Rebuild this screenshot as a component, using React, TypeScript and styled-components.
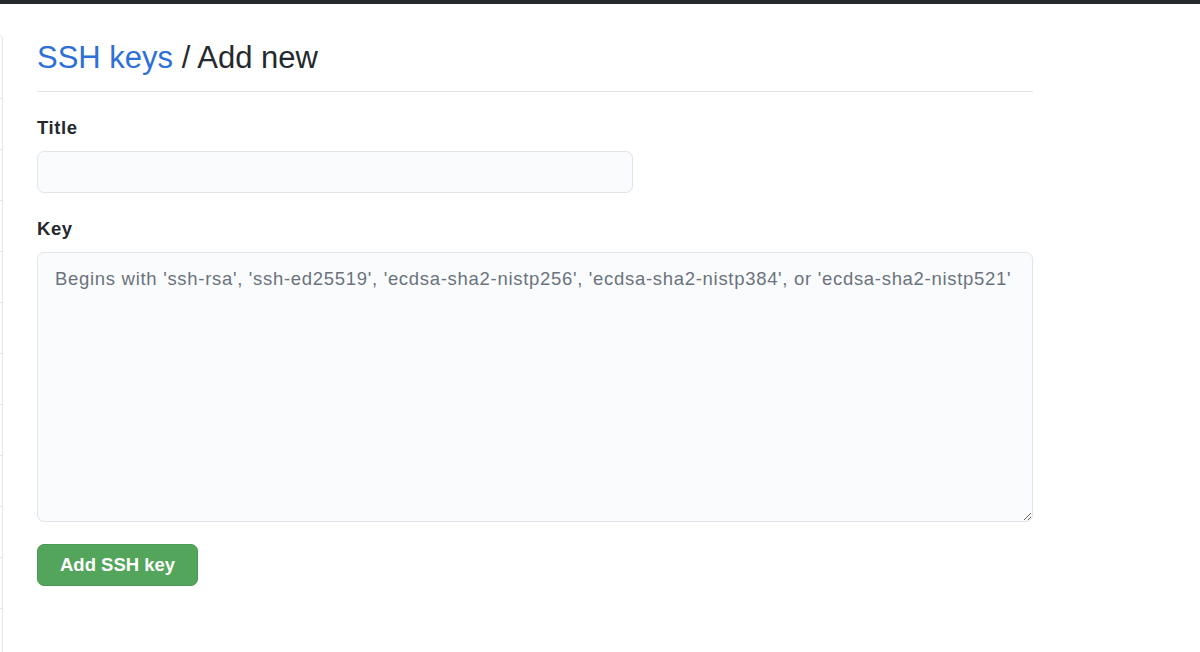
import React from 'react';
import styled, { createGlobalStyle } from 'styled-components';

const GlobalStyle = createGlobalStyle`
  body {
    margin: 0;
    background: #ffffff;
    font-family: "Liberation Sans", Arial, sans-serif;
    color: #24292e;
  }
`;

const TopBar = styled.div`
  height: 4px;
  background-color: #24292e;
`;

const Layout = styled.div`
  display: flex;
  align-items: flex-start;
  padding-top: 29px;
  height: 619px;
  overflow: hidden;
`;

const SideNav = styled.nav`
  flex: 0 0 240px;
  margin-left: -239px;
  border: 1px solid #e1e4e8;
  border-radius: 6px;
  display: flex;
  flex-direction: column;
`;

const NavItem = styled.div<{ $first?: boolean }>`
  height: ${({ $first }) => ($first ? '64px' : '50px')};
  border-bottom: 1px solid #e1e4e8;
`;

const Main = styled.main`
  flex: 0 0 996px;
  margin-left: 34px;
  display: flex;
  flex-direction: column;
  padding-top: 5px;
`;

const Subhead = styled.div`
  padding-bottom: 13px;
  border-bottom: 1px solid #e1e4e8;
  margin-bottom: 24px;
`;

const Heading = styled.h2`
  margin: 0;
  font-size: 31px;
  line-height: 40px;
  font-weight: 400;
  color: #24292e;
`;

const Crumb = styled.a`
  color: #2e6fd8;
  text-decoration: none;
`;

const Form = styled.form`
  display: flex;
  flex-direction: column;
`;

const Label = styled.label`
  font-size: 18.5px;
  line-height: 24px;
  font-weight: 700;
  letter-spacing: 0.6px;
  color: #24292e;
  margin-bottom: 11px;
`;

const Group = styled.div`
  display: flex;
  flex-direction: column;
  margin-bottom: 24px;
`;

const Input = styled.input`
  box-sizing: border-box;
  width: 596px;
  height: 42px;
  padding: 6px 16px;
  font-family: inherit;
  font-size: 18.5px;
  background-color: #fafbfc;
  border: 1px solid #e1e4e8;
  border-radius: 7px;
  outline: none;
`;

const TextArea = styled.textarea`
  box-sizing: border-box;
  width: 996px;
  height: 270px;
  padding: 14px 17px;
  font-family: inherit;
  font-size: 18.5px;
  line-height: 24px;
  letter-spacing: 0.7px;
  color: #24292e;
  background-color: #fafbfc;
  border: 1px solid #e1e4e8;
  border-radius: 7px;
  resize: vertical;
  outline: none;

  &::placeholder {
    color: #6a737d;
  }
`;

const ButtonRow = styled.div`
  margin-top: -2px;
`;

const Button = styled.button`
  height: 42px;
  padding: 0 22px;
  font-family: inherit;
  font-size: 18.5px;
  font-weight: 700;
  color: #ffffff;
  background-color: #52a55b;
  border: 1px solid #4a9a53;
  border-radius: 7px;
  cursor: pointer;
`;

const App: React.FC = () => {
  const onSubmitForm = (e: React.FormEvent<HTMLFormElement>) => {
    e.preventDefault();
  };

  return (
    <>
      <GlobalStyle />
      <TopBar />
      <Layout>
        <SideNav>
          <NavItem $first />
          {Array.from({ length: 12 }).map((_, i) => (
            <NavItem key={i} />
          ))}
        </SideNav>
        <Main>
          <Subhead>
            <Heading>
              <Crumb href="#">SSH keys</Crumb> / Add new
            </Heading>
          </Subhead>
          <Form onSubmit={onSubmitForm}>
            <Group>
              <Label htmlFor="title">Title</Label>
              <Input type="text" id="title" />
            </Group>
            <Group>
              <Label htmlFor="key">Key</Label>
              <TextArea
                id="key"
                placeholder="Begins with 'ssh-rsa', 'ssh-ed25519', 'ecdsa-sha2-nistp256', 'ecdsa-sha2-nistp384', or 'ecdsa-sha2-nistp521'"
              />
            </Group>
            <ButtonRow>
              <Button type="submit">Add SSH key</Button>
            </ButtonRow>
          </Form>
        </Main>
      </Layout>
    </>
  );
};

export default App;
